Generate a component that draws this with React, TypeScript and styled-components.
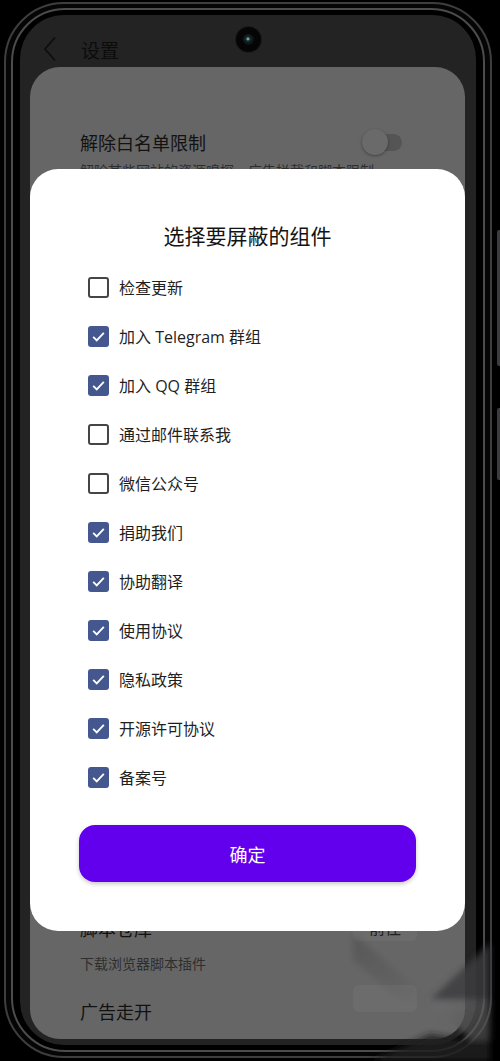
import React from 'react';
import styled, { createGlobalStyle } from 'styled-components';

const Global = createGlobalStyle`
  html, body { margin: 0; padding: 0; background: #000; }
  body { width: 500px; height: 1061px; overflow: hidden; font-family: "Noto Sans CJK SC", "Noto Sans", sans-serif; }
  * { box-sizing: border-box; }
`;

const Page = styled.div`
  position: relative;
  width: 500px;
  height: 1061px;
  background: #000;
  padding: 2px 8px 0 4px;
`;

const Frame = styled.div`
  position: relative;
  width: 488px;
  height: 1056px;
  border: 2px solid #3e3e40;
  border-radius: 60px;
  padding: 4px 5px;
  background: #050505;
`;

const Ring = styled.div`
  height: 100%;
  border: 2px solid #4c4c4f;
  border-radius: 54px;
  padding: 5px 7px;
  background: #000;
`;

const Screen = styled.div`
  position: relative;
  height: 100%;
  background: #232323;
  border-radius: 44px;
  overflow: hidden;
  display: flex;
  flex-direction: column;
`;

const Header = styled.div`
  height: 52px;
  flex: none;
  display: flex;
  align-items: flex-end;
  padding: 0 0 5px 23px;
  gap: 24px;
`;

const HeaderTitle = styled.span`
  font-size: 19px;
  line-height: 24px;
  color: #0c0c0c;
`;

const Camera = styled.div`
  position: absolute;
  left: 216px;
  top: 12px;
  width: 25px;
  height: 25px;
  border-radius: 50%;
  background: #050505;
  box-shadow: 0 0 0 1px #1a1a1a;
  display: flex;
  align-items: center;
  justify-content: center;
`;

const Lens = styled.div`
  width: 11px;
  height: 11px;
  border-radius: 50%;
  background: radial-gradient(circle at 45% 45%, #5fa8a0 0 1px, #1d2a2c 2px, #0c1214 5px);
`;

const Card = styled.div`
  flex: 1;
  margin: 0 11px 6px 10px;
  background: #666666;
  border-radius: 30px;
  display: flex;
  flex-direction: column;
  justify-content: space-between;
  padding: 62px 0 16px 50px;
  overflow: hidden;
`;

const Section = styled.div`
  display: flex;
  flex-direction: column;
`;

const SettingRow = styled.div`
  display: flex;
  align-items: center;
  justify-content: space-between;
  padding-right: 48px;
`;

const SettingTitle = styled.div<{ $gap?: number }>`
  font-size: 18px;
  line-height: 24px;
  color: #121212;
  margin-top: ${p => p.$gap ?? 0}px;
`;

const SettingSub = styled.div<{ $gap: number }>`
  font-size: 14px;
  line-height: 20px;
  color: #2e2e2e;
  margin-top: ${p => p.$gap}px;
`;

const Switch = styled.div`
  position: relative;
  width: 41px;
  height: 26px;
  margin-right: 14px;
  display: flex;
  align-items: center;
`;

const Track = styled.div`
  margin-left: 12px;
  width: 28px;
  height: 17px;
  border-radius: 9px;
  background: #555555;
`;

const Thumb = styled.div`
  position: absolute;
  left: 0;
  top: 0;
  width: 26px;
  height: 26px;
  border-radius: 50%;
  background: #6a6a6a;
  box-shadow: 0 1px 3px rgba(0, 0, 0, 0.35);
`;

const GhostButton = styled.div`
  width: 64px;
  height: 27px;
  border-radius: 6px;
  background: #6c6c6c;
  color: #222;
  font-size: 16px;
  line-height: 27px;
  text-align: center;
`;

const Dialog = styled.div`
  position: absolute;
  left: 10px;
  top: 154px;
  width: 435px;
  height: 762px;
  background: #fff;
  border-radius: 28px;
  padding: 52px 49px 49px;
  display: flex;
  flex-direction: column;
`;

const DialogTitle = styled.div`
  font-size: 21px;
  line-height: 28px;
  text-align: center;
  color: #141414;
  font-weight: 400;
`;

const List = styled.div`
  margin-top: 14px;
  padding-left: 9px;
  display: flex;
  flex-direction: column;
`;

const Item = styled.label`
  height: 49px;
  display: flex;
  align-items: center;
  gap: 10px;
`;

const Box = styled.span<{ $on: boolean }>`
  width: 21px;
  height: 21px;
  border-radius: 3px;
  flex: none;
  display: flex;
  align-items: center;
  justify-content: center;
  background: ${p => (p.$on ? '#45578f' : '#fff')};
  border: ${p => (p.$on ? 'none' : '2px solid #454545')};
`;

const Label = styled.span`
  font-family: "Open Sans", "Noto Sans CJK SC", sans-serif;
  font-size: 16px;
  line-height: 22px;
  color: #1f1f1f;
`;

const Confirm = styled.button`
  margin-top: 23px;
  height: 58px;
  border: none;
  border-radius: 16px;
  background: #6200ee;
  color: #fff;
  font-family: "Noto Sans CJK SC", sans-serif;
  font-size: 18px;
  font-weight: 400;
  box-shadow: 0 2px 4px rgba(0, 0, 0, 0.22);
`;

const SideKey = styled.div<{ $top: number; $h: number }>`
  position: absolute;
  right: 0;
  top: ${p => p.$top}px;
  width: 3px;
  height: ${p => p.$h}px;
  background: #3c3c3e;
  border-radius: 2px 0 0 2px;
`;

const Glare = styled.svg`
  position: absolute;
  left: 340px;
  top: 900px;
  pointer-events: none;
`;

const items: { label: string; on: boolean }[] = [
  { label: '检查更新', on: false },
  { label: '加入 Telegram 群组', on: true },
  { label: '加入 QQ 群组', on: true },
  { label: '通过邮件联系我', on: false },
  { label: '微信公众号', on: false },
  { label: '捐助我们', on: true },
  { label: '协助翻译', on: true },
  { label: '使用协议', on: true },
  { label: '隐私政策', on: true },
  { label: '开源许可协议', on: true },
  { label: '备案号', on: true },
];

export default function App() {
  return (
    <Page>
      <Global />
      <Frame>
        <Ring>
          <Screen>
            <Header>
              <svg width="14" height="26" viewBox="0 0 14 26">
                <path d="M12 1.5 L2 13 L12 24.5" fill="none" stroke="#0e0e0e" strokeWidth="1.8" />
              </svg>
              <HeaderTitle>设置</HeaderTitle>
            </Header>
            <Camera>
              <Lens />
            </Camera>
            <Card>
              <Section>
                <SettingRow>
                  <SettingTitle>解除白名单限制</SettingTitle>
                  <Switch>
                    <Track />
                    <Thumb />
                  </Switch>
                </SettingRow>
                <SettingSub $gap={5}>解除某些网站的资源嗅探、广告拦截和脚本限制</SettingSub>
              </Section>
              <Section>
                <SettingRow>
                  <SettingTitle>脚本仓库</SettingTitle>
                  <GhostButton>前往</GhostButton>
                </SettingRow>
                <SettingSub $gap={12}>下载浏览器脚本插件</SettingSub>
                <SettingRow>
                  <SettingTitle $gap={26}>广告走开</SettingTitle>
                  <GhostButton />
                </SettingRow>
              </Section>
            </Card>
            <Dialog>
              <DialogTitle>选择要屏蔽的组件</DialogTitle>
              <List>
                {items.map(it => (
                  <Item key={it.label}>
                    <Box $on={it.on}>
                      {it.on && (
                        <svg width="17" height="17" viewBox="0 0 24 24">
                          <path d="M4.5 12.5 L9.5 17.5 L19.5 7" fill="none" stroke="#fff" strokeWidth="2.6" />
                        </svg>
                      )}
                    </Box>
                    <Label>{it.label}</Label>
                  </Item>
                ))}
              </List>
              <Confirm>确定</Confirm>
            </Dialog>
          </Screen>
        </Ring>
      </Frame>
      <SideKey $top={230} $h={136} />
      <SideKey $top={408} $h={72} />
      <Glare width="160" height="161" viewBox="0 0 160 161">
        <defs>
          <filter id="soft" x="-20%" y="-20%" width="140%" height="140%">
            <feGaussianBlur stdDeviation="3" />
          </filter>
          <linearGradient id="g2" x1="0" y1="0" x2="1" y2="1">
            <stop offset="0" stopColor="#6e6e6e" stopOpacity="0.7" />
            <stop offset="1" stopColor="#505050" stopOpacity="0.7" />
          </linearGradient>
          <linearGradient id="g3" x1="0" y1="0" x2="1" y2="1">
            <stop offset="0" stopColor="#000" stopOpacity="0.14" />
            <stop offset="1" stopColor="#000" stopOpacity="0" />
          </linearGradient>
        </defs>
        <g filter="url(#soft)">
          <polygon points="13,33 90,100 60,100 13,60" fill="url(#g3)" />
          <polygon points="90,100 150,43 150,100" fill="#3c3c3e" opacity="0.85" />
          <polygon points="90,100 150,100 150,140 130,140" fill="url(#g2)" />
          <polygon points="30,161 90,134 130,140 150,140 150,161" fill="#1c1c1e" opacity="0.85" />
        </g>
      </Glare>
    </Page>
  );
}
